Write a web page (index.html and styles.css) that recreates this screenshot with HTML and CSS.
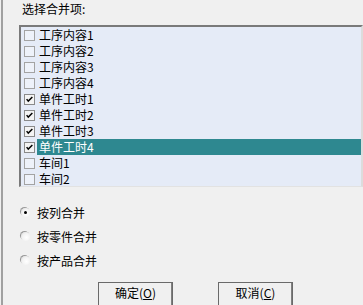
FILE: index.html
```html
<!DOCTYPE html>
<html>
<head>
<meta charset="utf-8">
<link rel="stylesheet" href="styles.css">
</head>
<body>
<div class="dlg">
  <div class="title">选择合并项:</div>
  <div class="list">
    <div class="row"><span class="cb"></span><span class="t">工序内容1</span></div>
    <div class="row"><span class="cb"></span><span class="t">工序内容2</span></div>
    <div class="row"><span class="cb"></span><span class="t">工序内容3</span></div>
    <div class="row"><span class="cb"></span><span class="t">工序内容4</span></div>
    <div class="row"><span class="cb on"><svg viewBox="0 0 11 11" width="11" height="11"><path d="M2 5 L4 7.5 L9 2.5" fill="none" stroke="#000" stroke-width="1.8"/></svg></span><span class="t">单件工时1</span></div>
    <div class="row"><span class="cb on"><svg viewBox="0 0 11 11" width="11" height="11"><path d="M2 5 L4 7.5 L9 2.5" fill="none" stroke="#000" stroke-width="1.8"/></svg></span><span class="t">单件工时2</span></div>
    <div class="row"><span class="cb on"><svg viewBox="0 0 11 11" width="11" height="11"><path d="M2 5 L4 7.5 L9 2.5" fill="none" stroke="#000" stroke-width="1.8"/></svg></span><span class="t">单件工时3</span></div>
    <div class="row sel"><span class="cb on"><svg viewBox="0 0 11 11" width="11" height="11"><path d="M2 5 L4 7.5 L9 2.5" fill="none" stroke="#000" stroke-width="1.8"/></svg></span><span class="t">单件工时4</span></div>
    <div class="row"><span class="cb"></span><span class="t">车间1</span></div>
    <div class="row"><span class="cb"></span><span class="t">车间2</span></div>
  </div>
  <div class="radios">
    <div class="radio"><span class="rb on"></span><span>按列合并</span></div>
    <div class="radio"><span class="rb"></span><span>按零件合并</span></div>
    <div class="radio"><span class="rb"></span><span>按产品合并</span></div>
  </div>
  <div class="buttons">
    <div class="btn">确定(<u>O</u>)</div>
    <div class="btn">取消(<u>C</u>)</div>
  </div>
</div>
</body>
</html>
```
FILE: styles.css
```css
html, body {
  margin: 0;
  padding: 0;
  background: #f0f0f0;
  width: 363px;
  height: 305px;
  overflow: hidden;
  font-family: "Noto Sans CJK SC", "DejaVu Sans", sans-serif;
  font-size: 12px;
  color: #000;
}
.dlg {
  margin-left: 1px;
  border-left: 2px solid #a0a0a0;
  height: 305px;
  box-sizing: border-box;
  padding-left: 16px;
}
.title {
  height: 25px;
  line-height: 18px;
  padding-left: 3px;
}
.list {
  width: 344px;
  height: 162px;
  box-sizing: border-box;
  border-top: 2px solid #7a7a7a;
  border-left: 2px solid #7a7a7a;
  border-right: 2px solid #dcdcdc;
  border-bottom: 1px solid #e2e2e2;
  background: #e5ebf7;
  display: flex;
  flex-direction: column;
}
.row {
  height: 16px;
  display: flex;
  align-items: center;
  padding-left: 3px;
}
.cb {
  width: 11px;
  height: 11px;
  box-sizing: border-box;
  border: 1px solid #a3a3a3;
  background: #eef2fa;
  display: flex;
  align-items: center;
  justify-content: center;
  flex: none;
}
.cb svg { display: block; }
.cb.on { border-color: #8a8a8a; background: #f4f4f4; }
.t {
  margin-left: 2px;
  padding: 0 2px 0 2px;
  height: 16px;
  line-height: 16px;
  flex: 1;
}
.sel .t {
  background: #2e8890;
  color: #fff;
}
.radios {
  margin-top: 17px;
  display: flex;
  flex-direction: column;
  gap: 8px;
}
.radio {
  height: 16px;
  display: flex;
  align-items: center;
  gap: 7px;
  padding-left: 2px;
}
.rb {
  width: 9px;
  height: 9px;
  border-radius: 50%;
  background: radial-gradient(circle at 60% 60%, #ffffff 0%, #f2f2f2 55%, #c8c8c8 100%);
  box-shadow: -1px -1px 0 #9a9a9a;
  position: relative;
  flex: none;
}
.rb.on::after {
  content: "";
  position: absolute;
  left: 3px;
  top: 3px;
  width: 3px;
  height: 3px;
  border-radius: 50%;
  background: #000;
}
.buttons {
  margin-top: 14px;
  display: flex;
  gap: 45px;
  padding-left: 79px;
}
.btn {
  width: 75px;
  height: 25px;
  box-sizing: border-box;
  border: 1px solid #000;
  border-top-color: #fff;
  border-left-color: #fff;
  box-shadow: inset -1px -1px 0 #808080;
  outline: 1px solid #6a6a6a;
  outline-offset: -1px;
  text-align: center;
  line-height: 20px;
  background: #f0f0f0;
}
.btn u { text-decoration: underline; }
```
